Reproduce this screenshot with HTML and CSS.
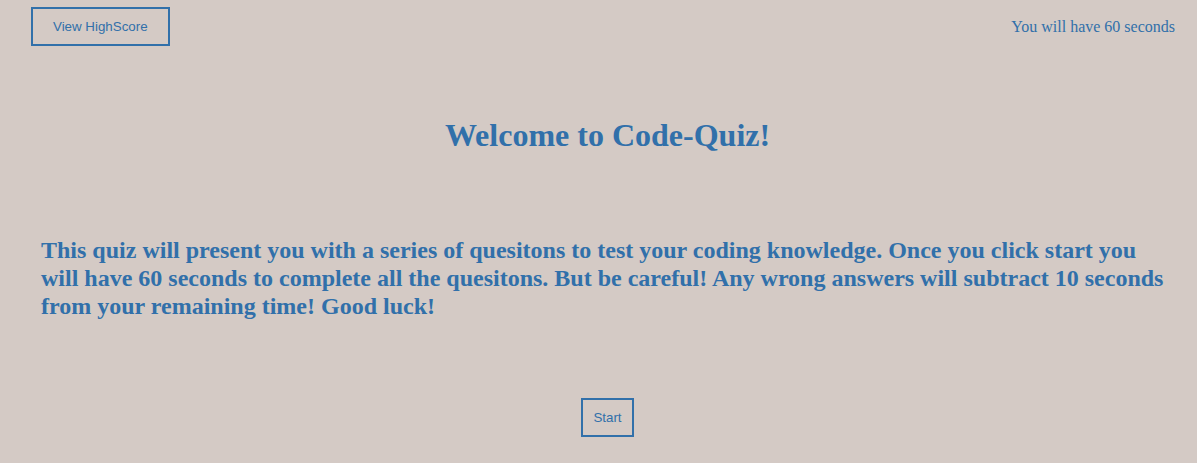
FILE: index.html
```html
<!DOCTYPE html>
<html lang="en">
<head>
<meta charset="utf-8">
<title>Code Quiz</title>
<link rel="stylesheet" href="styles.css">
</head>
<body>
<header class="topbar">
  <button class="btn btn-wide">View HighScore</button>
  <span class="timer">You will have 60 seconds</span>
</header>
<main class="content">
  <h1 class="title">Welcome to Code-Quiz!</h1>
  <p class="intro">This quiz will present you with a series of quesitons to test your coding knowledge. Once you click start you will have 60 seconds to complete all the quesitons. But be careful! Any wrong answers will subtract 10 seconds from your remaining time! Good luck!</p>
  <div class="actions">
    <button class="btn">Start</button>
  </div>
</main>
</body>
</html>
```
FILE: styles.css
```css
html, body {
  margin: 0;
  padding: 0;
}
body {
  background: #d4cac5;
  color: #3170aa;
  font-family: "Liberation Serif", "Times New Roman", serif;
  height: 463px;
  overflow: hidden;
}
.topbar {
  display: flex;
  justify-content: space-between;
  align-items: center;
  padding: 7px 22px 0 31px;
}
.btn {
  font-family: "Liberation Sans", Arial, sans-serif;
  font-size: 13.33px;
  line-height: 15px;
  color: #3170aa;
  background: transparent;
  border: 2px solid #3170aa;
  border-radius: 0;
  padding: 10px 10px;
  margin: 0;
  cursor: pointer;
}
.btn-wide {
  padding: 10px 20px;
}
.timer {
  font-size: 16px;
}
.content {
  display: flex;
  flex-direction: column;
}
.title {
  margin: 71px 0 0;
  padding-left: 18px;
  text-align: center;
  font-size: 32px;
  font-weight: bold;
  line-height: 37px;
}
.intro {
  margin: 82px 0 0;
  padding: 0 30px 0 41px;
  font-size: 24px;
  font-weight: bold;
  line-height: 28px;
}
.actions {
  display: flex;
  justify-content: center;
  padding-left: 18px;
  margin-top: 78px;
}
```
